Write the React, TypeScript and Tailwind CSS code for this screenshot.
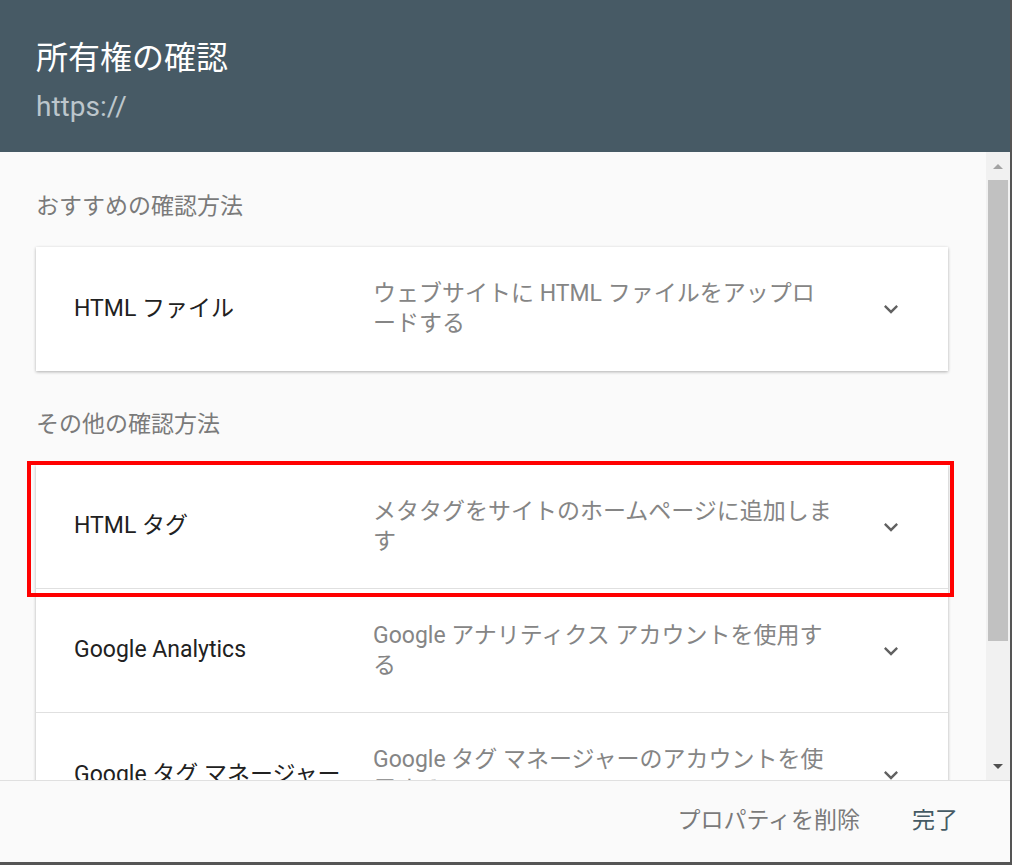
import React from "react";

const font = { fontFamily: 'Roboto, "Noto Sans CJK JP", "Noto Sans", sans-serif' };

function Chevron() {
  return (
    <svg width="28" height="28" viewBox="0 0 24 24" className="text-[#616161]">
      <path d="M16.59 8.59L12 13.17 7.41 8.59 6 10l6 6 6-6z" fill="currentColor" />
    </svg>
  );
}

function Row({ title, desc, divider }: { title: string; desc: string; divider?: boolean }) {
  return (
    <div className={`flex h-[124px] items-center shrink-0 ${divider ? "border-b border-[#e0e0e0]" : ""}`}>
      <div className="w-[337px] shrink-0 pl-[38px] text-[23px] text-[#212121] whitespace-nowrap">{title}</div>
      <div className="w-[460px] shrink-0 text-[23px] leading-[30px] text-[#858585]">{desc}</div>
      <div className="flex flex-1 justify-center">
        <Chevron />
      </div>
    </div>
  );
}

export default function App() {
  return (
    <div style={font} className="flex h-[865px] w-[1012px] flex-col overflow-hidden border-b-[3px] border-r-2 border-[#555]">
      <div className="h-[152px] shrink-0 bg-[#475a65] pl-[36px] pt-[38px]">
        <div className="text-[32px] leading-[40px] text-white">所有権の確認</div>
        <div className="mt-[14px] text-[28px] leading-[30px] text-[#bcc6cc]">https://</div>
      </div>
      <div className="flex h-[628px] shrink-0 bg-[#fafafa]">
        <div className="flex-1 overflow-hidden pl-[36px] pr-[38px] pt-[40px]">
          <div className="text-[23px] leading-[30px] text-[#7a7a7a]">おすすめの確認方法</div>
          <div className="mt-[25px] bg-white shadow-[0_1px_3px_rgba(0,0,0,0.3)]">
            <Row title="HTML ファイル" desc="ウェブサイトに HTML ファイルをアップロードする" />
          </div>
          <div className="mt-[39px] text-[23px] leading-[30px] text-[#7a7a7a]">その他の確認方法</div>
          <div className="relative mt-[25px] bg-white shadow-[0_1px_3px_rgba(0,0,0,0.3)]">
            <Row title="HTML タグ" desc="メタタグをサイトのホームページに追加します" divider />
            <Row title="Google Analytics" desc="Google アナリティクス アカウントを使用する" divider />
            <Row title="Google タグ マネージャー" desc="Google タグ マネージャーのアカウントを使用する" />
            <div className="absolute left-[-9px] top-[-4px] h-[136px] w-[927px] border-4 border-[#ff0000]" />
          </div>
        </div>
        <div className="flex w-[24px] shrink-0 flex-col items-center bg-[#f1f1f1]">
          <div className="flex h-[28px] w-full items-center justify-center">
            <div className="h-0 w-0 border-x-[5px] border-b-[5px] border-x-transparent border-b-[#a3a3a3]" />
          </div>
          <div className="h-[461px] w-[20px] bg-[#c1c1c1]" />
          <div className="flex-1" />
          <div className="flex h-[28px] w-full items-center justify-center">
            <div className="h-0 w-0 border-x-[5px] border-t-[5px] border-x-transparent border-t-[#505050]" />
          </div>
        </div>
      </div>
      <div className="flex flex-1 items-center justify-end gap-[52px] border-t border-[#e0e0e0] bg-[#fafafa] pr-[52px]">
        <span className="text-[23px] text-[#7a7a7a]">プロパティを削除</span>
        <span className="text-[23px] text-[#455a64]">完了</span>
      </div>
    </div>
  );
}
